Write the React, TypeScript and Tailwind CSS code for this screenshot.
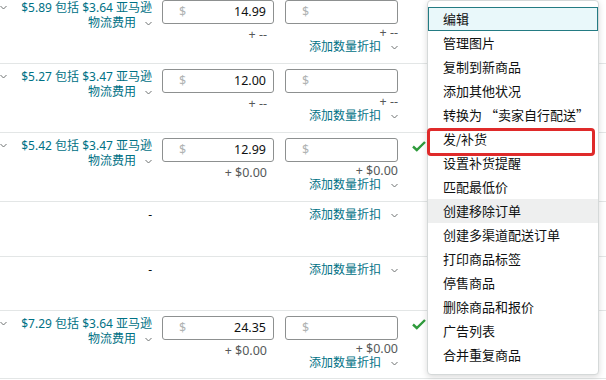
import React from "react";

function Chev({ className = "" }: { className?: string }) {
  return (
    <svg width="7" height="5" viewBox="0 0 7 5" className={className}>
      <path d="M0.5 1 L3.5 4 L6.5 1" fill="none" stroke="#6f7373" strokeWidth="1" />
    </svg>
  );
}

function Check() {
  return (
    <svg width="14" height="11" viewBox="0 0 14 11">
      <path d="M1 5.5 L4.8 9 L13 1" fill="none" stroke="#2f9b3c" strokeWidth="2.4" />
    </svg>
  );
}

type RowProps = {
  price?: string;
  fee?: string;
  value?: string;
  leftSub?: string;
  rightSub?: string;
  check?: boolean;
  h: string;
};

function PriceRow({ price, fee, value, leftSub, rightSub, check, h }: RowProps) {
  return (
    <div className={`flex ${h} border-b border-[#e3e6e6]`}>
      <div className="w-[20px] pt-[10px]">
        <Chev />
      </div>
      <div className="w-[132px] pt-[5px] text-right text-[12px] leading-[15px] text-[#007185] whitespace-nowrap">
        <div>
          {price} 包括 {fee} 亚马逊
        </div>
        <div className="flex items-center justify-end">
          <span>物流费用</span>
          <Chev className="ml-[9px] mt-[1px]" />
        </div>
      </div>
      <div className="ml-[10px] w-[112px] pt-[5px]">
        <div className="flex h-[24px] items-center justify-between rounded-[3px] border border-[#8d9090] pl-[16px] pr-[7px] text-[12.5px]">
          <span className="text-[#b0b3b3]">$</span>
          <span className="text-[#0f1111]">{value}</span>
        </div>
        <div className="mt-[4px] pr-[7px] text-right text-[12.5px] leading-[14px] text-[#565959]">{leftSub}</div>
      </div>
      <div className="ml-[11px] w-[113px] pt-[5px]">
        <div className="flex h-[24px] items-center rounded-[3px] border border-[#8d9090] pl-[16px] text-[12.5px]">
          <span className="text-[#b0b3b3]">$</span>
        </div>
        <div className="mt-[2px] text-right text-[12.5px] leading-[14px] text-[#565959]">{rightSub}</div>
        <div className="flex items-center justify-end text-[12px] leading-[14px] text-[#007185]">
          <span>添加数量折扣</span>
          <Chev className="ml-[10px] mt-[1px]" />
        </div>
      </div>
      <div className="ml-[14px] pt-[8px]">{check ? <Check /> : null}</div>
    </div>
  );
}

function DashRow({ h }: { h: string }) {
  return (
    <div className={`flex ${h} border-b border-[#e3e6e6]`}>
      <div className="w-[152px] pt-[5px] text-right text-[12px] leading-[15px] text-[#0f1111]">-</div>
      <div className="ml-[133px] w-[113px] pt-[5px]">
        <div className="flex items-center justify-end text-[12px] leading-[15px] text-[#007185]">
          <span>添加数量折扣</span>
          <Chev className="ml-[10px] mt-[1px]" />
        </div>
      </div>
    </div>
  );
}

const items = [
  "编辑",
  "管理图片",
  "复制到新商品",
  "添加其他状况",
  "转换为 “卖家自行配送”",
  "发/补货",
  "设置补货提醒",
  "匹配最低价",
  "创建移除订单",
  "创建多渠道配送订单",
  "打印商品标签",
  "停售商品",
  "删除商品和报价",
  "广告列表",
  "合并重复商品",
];

export default function App() {
  return (
    <div className="relative h-[380px] w-[606px] overflow-hidden bg-white font-['Noto_Sans','Noto_Sans_CJK_SC',sans-serif]">
      <div className="mt-[-5px] flex flex-col">
        <PriceRow h="h-[69px]" price="$5.89" fee="$3.64" value="14.99" leftSub="+ --" rightSub="+ --" />
        <PriceRow h="h-[69px]" price="$5.27" fee="$3.47" value="12.00" leftSub="+ --" rightSub="+ --" />
        <PriceRow h="h-[69px]" price="$5.42" fee="$3.47" value="12.99" leftSub="+ $0.00" rightSub="+ $0.00" check />
        <DashRow h="h-[55px]" />
        <DashRow h="h-[54px]" />
        <PriceRow h="h-[68px]" price="$7.29" fee="$3.64" value="24.35" leftSub="+ $0.00" rightSub="+ $0.00" check />
      </div>

      <div className="absolute left-[427px] top-0 w-[172px] rounded-[4px] border border-[#d5d9d9] bg-white pt-[6px] pb-[7px] font-['Noto_Sans_CJK_SC',sans-serif] shadow-[0_2px_6px_rgba(0,0,0,0.15)]">
        {items.map((t, i) => (
          <div
            key={t}
            className={
              i === 0
                ? "flex h-[24px] items-center whitespace-nowrap border border-[#237b83] bg-[#e9f8fa] pl-[14px] text-[13px] text-[#0f1111]"
                : i === 8
                ? "flex h-[24px] items-center whitespace-nowrap bg-[#eeefef] pl-[15px] text-[13px] text-[#0f1111]"
                : "flex h-[24px] items-center whitespace-nowrap pl-[15px] text-[13px] text-[#0f1111]"
            }
          >
            {t}
          </div>
        ))}
      </div>

      <div className="absolute left-[427px] top-[128px] h-[28px] w-[168px] rounded-[4px] border-[3px] border-[#df2a2a]" />
    </div>
  );
}
